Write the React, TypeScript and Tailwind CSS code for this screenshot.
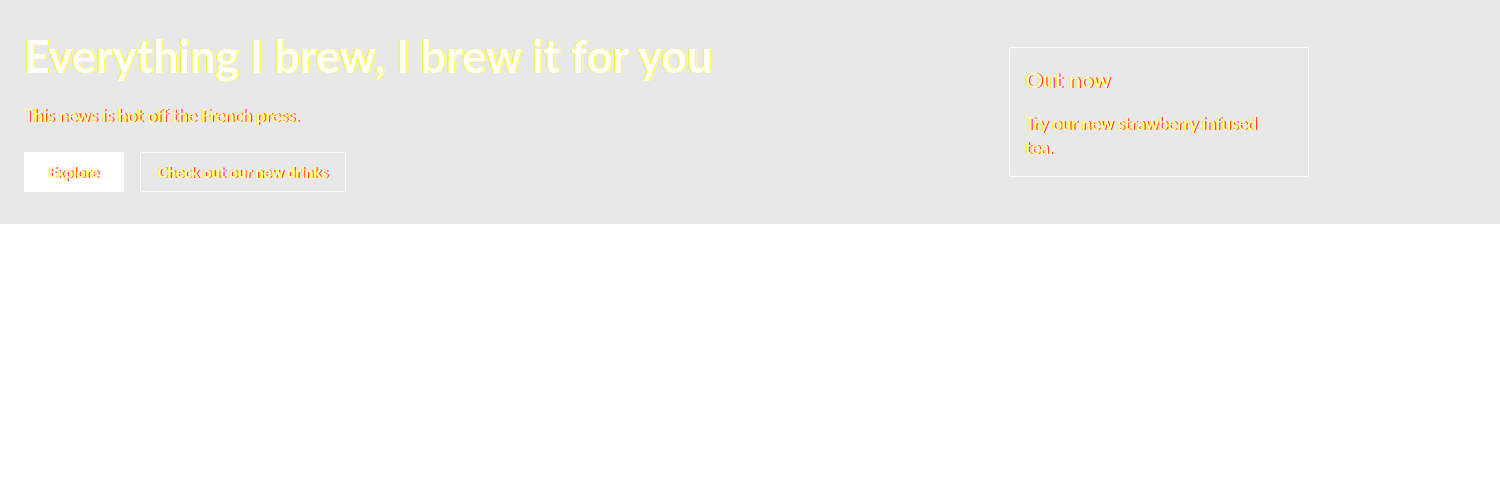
const copy =
  "text-[#fff6d8] [text-shadow:-1px_0_#ffff00,1px_0_#ff0000]";

export default function App() {
  return (
    <main className="min-h-screen bg-white font-['Lato','Open_Sans',sans-serif]">
      <section className="flex flex-wrap items-center gap-6 bg-[#e8e8e8] px-6 py-8 md:flex-nowrap">
        <div className="min-w-0 flex-5">
          <h1 className="text-[45px] leading-12 font-bold text-white [text-shadow:-1px_0_#ffff00,1px_0_#ffff00]">
            Everything I brew, I brew it for you
          </h1>
          <p className={`mt-6 text-[17px] leading-6 ${copy}`}>
            This news is hot off the French press.
          </p>
          <div className="mt-6 flex flex-wrap gap-4">
            <button
              type="button"
              className={`h-10 min-w-25 rounded-xs bg-white px-6 text-[15px] font-bold ${copy}`}
            >
              Explore
            </button>
            <button
              type="button"
              className={`h-10 rounded-xs border border-white px-[17px] text-[15px] font-bold ${copy}`}
            >
              Check out our new drinks
            </button>
          </div>
        </div>
        <div className="flex min-w-0 flex-4 justify-center">
          <article className="w-full max-w-[300px] rounded-xs border border-white py-4 pr-6 pl-4">
            <h2 className={`text-[22px] leading-8 ${copy}`}>Out now</h2>
            <p className={`mt-4 text-[17px] leading-6 ${copy}`}>
              Try our new strawberry infused tea.
            </p>
          </article>
        </div>
      </section>
    </main>
  );
}
